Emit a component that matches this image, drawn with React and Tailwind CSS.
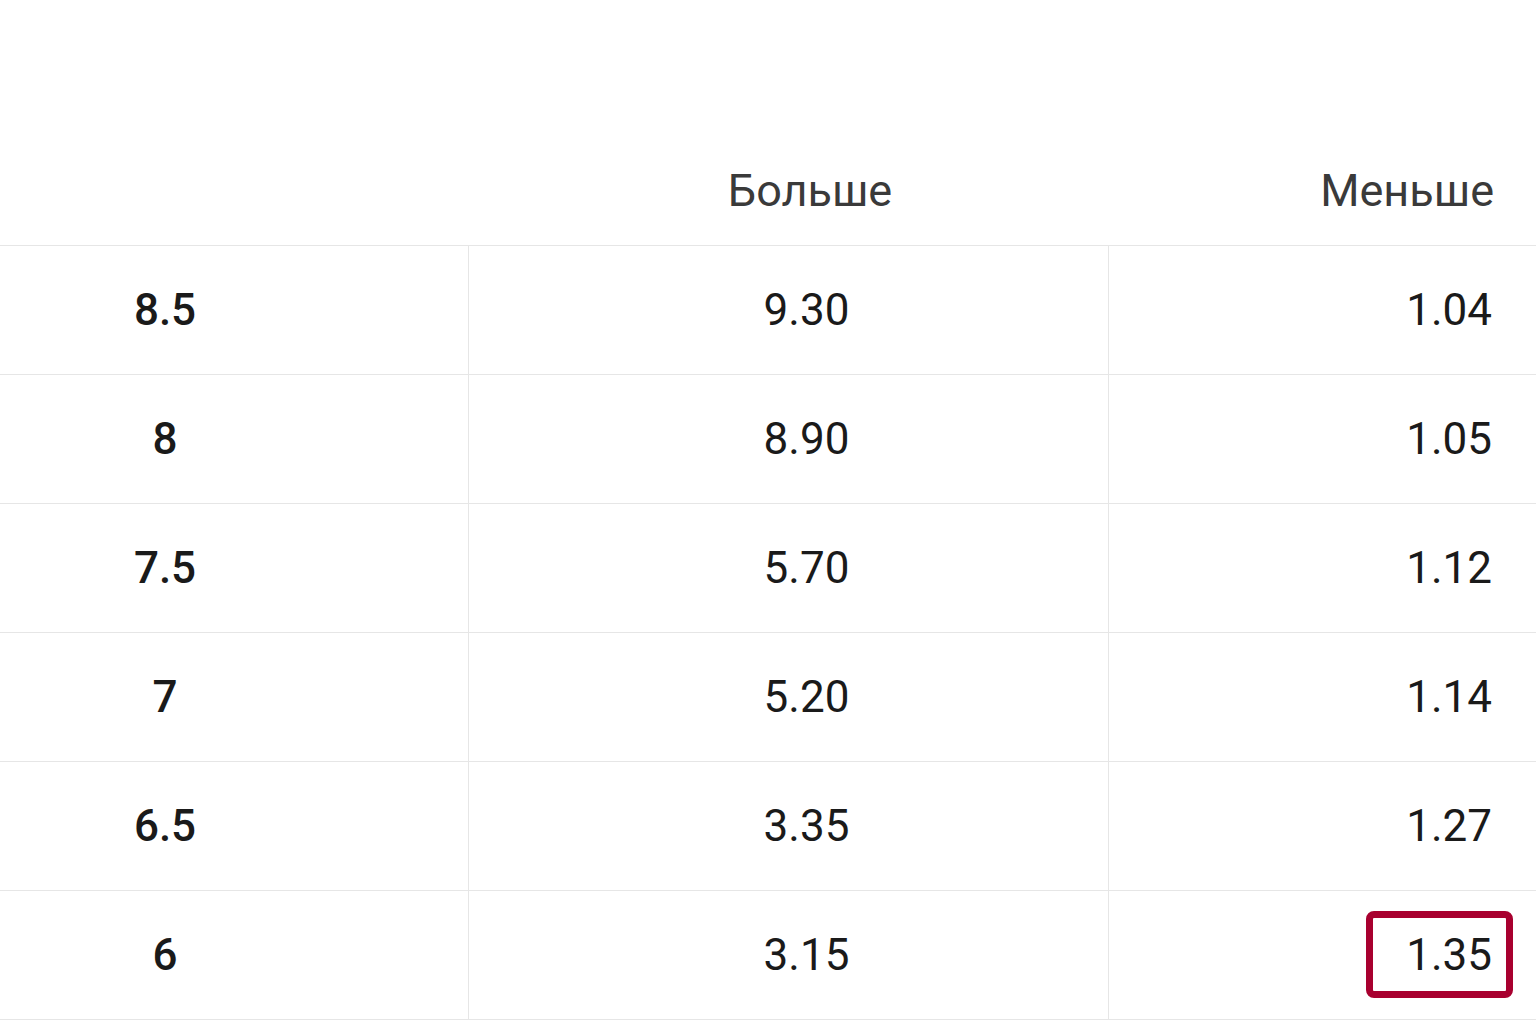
import React from 'react';

const rows = [
  { line: '8.5', over: '9.30', under: '1.04' },
  { line: '8', over: '8.90', under: '1.05' },
  { line: '7.5', over: '5.70', under: '1.12' },
  { line: '7', over: '5.20', under: '1.14' },
  { line: '6.5', over: '3.35', under: '1.27' },
  { line: '6', over: '3.15', under: '1.35', marked: true },
];

function App() {
  return (
    <div className="w-[1536px] h-[1024px] bg-white overflow-hidden" style={{ fontFamily: 'Roboto, "Noto Sans", sans-serif' }}>
      {/* Header */}
      <div className="grid grid-cols-[468px_640px_428px] h-[246px] border-b border-[#e6e6e6] items-end pb-[32px] text-[45px] text-[#3a3a3a] leading-none">
        <div></div>
        <div className="pl-[44px] text-center">Больше</div>
        <div className="pr-[42px] text-right">Меньше</div>
      </div>

      {rows.map((row) => (
        <div key={row.line} className="grid grid-cols-[468px_640px_428px] h-[129px] border-b border-[#e6e6e6] text-[44px] text-[#1a1a1a] leading-none">
          <div className="flex items-center justify-center pr-[138px] font-medium">{row.line}</div>
          <div className="flex items-center justify-center pl-[36px] border-l border-[#e6e6e6]">{row.over}</div>
          <div className="relative flex items-center justify-end pr-[44px] border-l border-[#e6e6e6]">
            {row.marked && (
              <div className="absolute right-[23px] top-[20px] w-[147px] h-[87px] border-[7px] border-[#a8002f] rounded-[8px]"></div>
            )}
            <span>{row.under}</span>
          </div>
        </div>
      ))}
    </div>
  );
}

export default App;
